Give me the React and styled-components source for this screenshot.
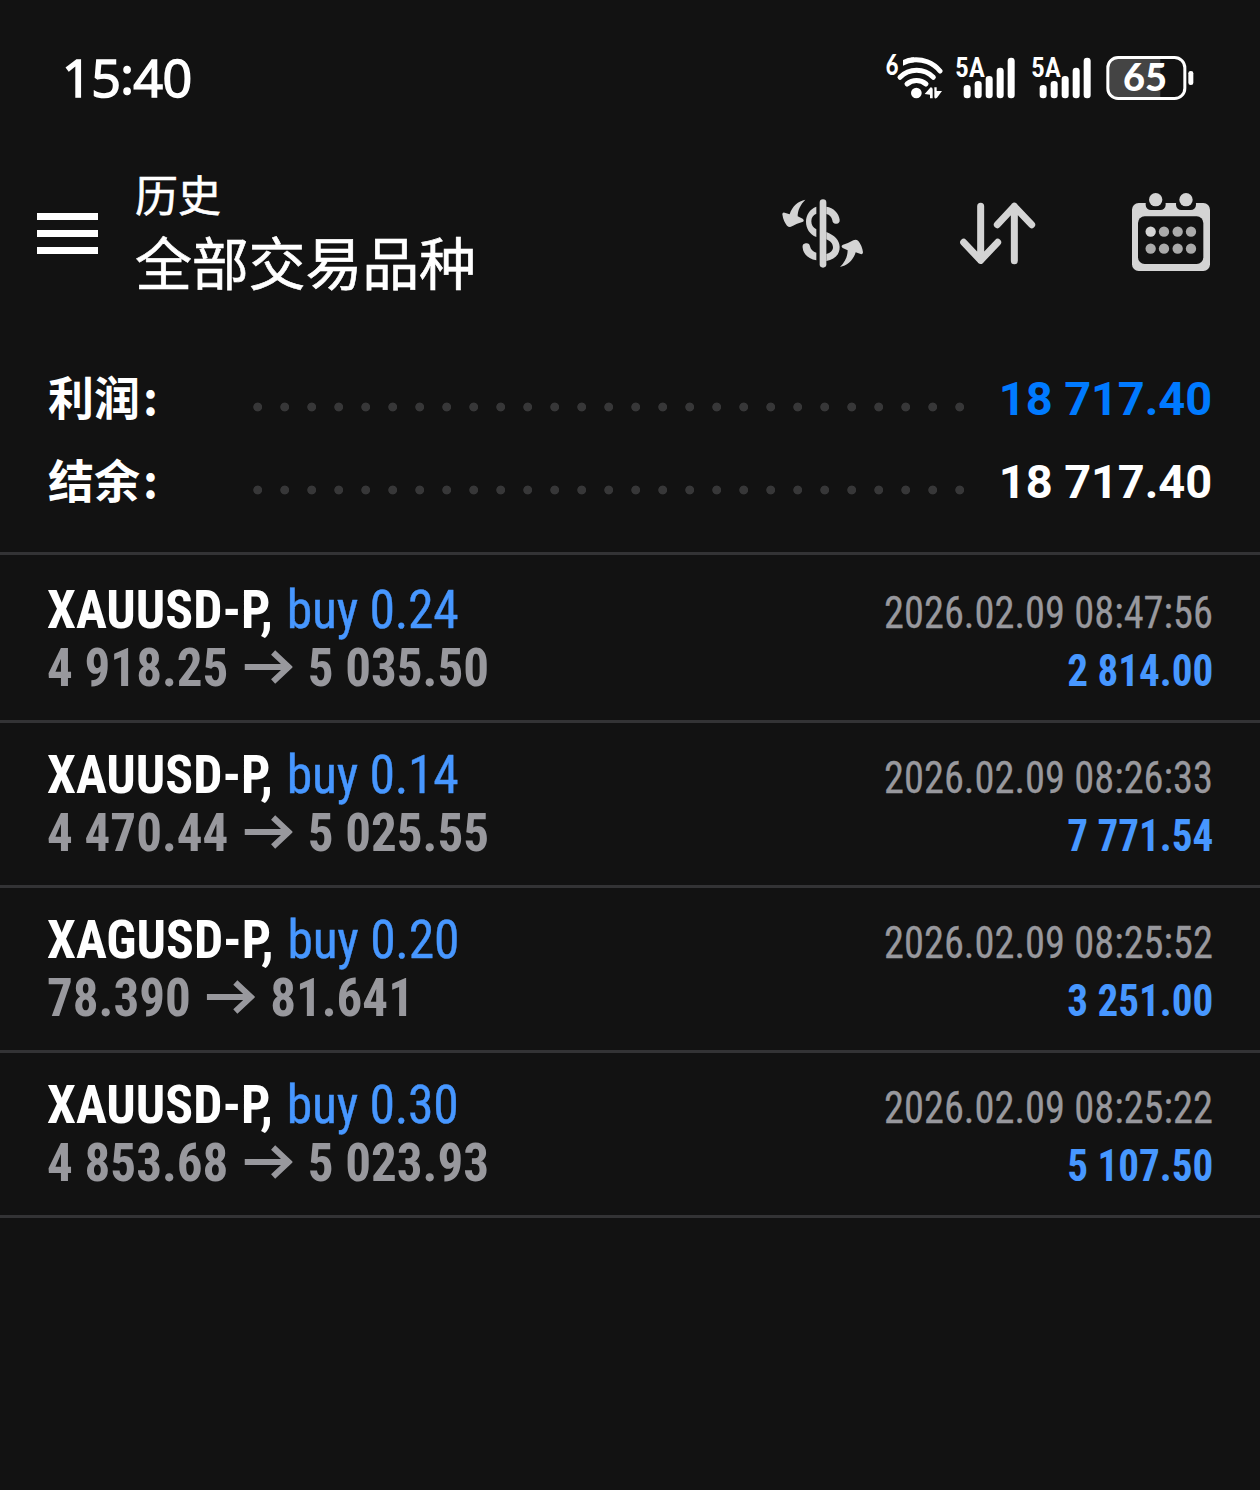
import React from 'react'
import styled, { createGlobalStyle } from 'styled-components'

const GlobalStyle = createGlobalStyle`
  body {
    margin: 0;
    background: #121212;
    color: #fff;
    font-family: Roboto, 'Noto Sans CJK SC', sans-serif;
  }
`

const Screen = styled.div`
  width: 1260px;
  height: 1490px;
  overflow: hidden;
  background: #121212;
`

const StatusBar = styled.div`
  display: flex;
  align-items: center;
  justify-content: space-between;
  height: 155px;
  padding: 0 66px 0 62px;
  box-sizing: border-box;
`

const Clock = styled.span`
  padding-bottom: 1px;
  font-family: 'Open Sans', sans-serif;
  font-size: 52px;
  letter-spacing: -0.6px;
  line-height: 60px;
  -webkit-text-stroke: 1.6px #fff;
`

const ClockColon = styled.span`
  line-height: 1;
  vertical-align: 3px;
`

const StatusIcons = styled.div`
  display: flex;
  align-items: center;
`

const StatusSvg = styled.svg`
  display: block;
  width: ${p => p.$w}px;
  height: 64px;
  margin-right: ${p => p.$gap || 0}px;
`

const Header = styled.header`
  display: flex;
  align-items: center;
  height: 157px;
  padding: 0 50px 0 37px;
`

const Burger = styled.div`
  display: flex;
  flex-direction: column;
  gap: 10px;
  width: 61px;
  margin-right: 37px;
`

const BurgerLine = styled.span`
  height: 7px;
  background: #fff;
`

const Titles = styled.div`
  flex: 1;
  padding-bottom: 8px;
  font-family: 'Noto Sans CJK SC', sans-serif;
  -webkit-text-stroke: 0.6px #fff;
`

const Subtitle = styled.div`
  font-size: 43px;
  line-height: 60px;
`

const Title = styled.div`
  font-size: 57px;
  letter-spacing: -0.2px;
  line-height: 74px;
`

const Actions = styled.div`
  display: flex;
  align-items: center;
`

const ActionSvg = styled.svg`
  display: block;
  width: ${p => p.$w}px;
  height: 80px;
  margin-left: ${p => p.$gap || 0}px;
  overflow: visible;
`

const Summary = styled.section`
  height: 243px;
  padding: 45px 48px 0;
  box-sizing: border-box;
  border-bottom: 3px solid #333335;
`

const SummaryRow = styled.div`
  display: flex;
  align-items: center;
  height: 83px;
`

const Label = styled.span`
  width: 204px;
  padding-bottom: 6px;
  font-family: 'Noto Sans CJK SC', sans-serif;
  font-size: 46px;
  font-weight: 700;
  line-height: 77px;
`

const Colon = styled.span`
  margin-left: 3px;
`

const Dots = styled.span`
  width: 716px;
  height: 10px;
  margin-top: 17px;
  background: radial-gradient(circle at 5.7px 5px, #373738 4px, transparent 4.8px) 0 0 / 27px 10px repeat-x;
`

const Total = styled.span`
  flex: 1;
  color: ${p => p.$color};
  font-size: 47px;
  font-weight: 700;
  letter-spacing: -0.1px;
  line-height: 83px;
  text-align: right;
  white-space: nowrap;
`

const Deal = styled.article`
  height: 165px;
  padding: 23px 47px 0;
  box-sizing: border-box;
  border-bottom: 3px solid #333335;
  font-family: 'Roboto Condensed', Roboto, sans-serif;
  font-stretch: 75%;
  &:first-of-type {
    height: 168px;
    padding-top: 26px;
  }
`

const Line = styled.div`
  display: flex;
  align-items: baseline;
  justify-content: space-between;
  height: 58px;
  line-height: 58px;
  white-space: nowrap;
`

const Symbol = styled.span`
  font-size: 54px;
  font-weight: 700;
  transform: scaleX(0.957);
  transform-origin: left;
`

const Side = styled.span`
  margin-left: 2px;
  color: #4797ff;
  font-weight: 400;
  letter-spacing: -0.3px;
  -webkit-text-stroke: 0.4px #4797ff;
`

const Prices = styled.span`
  color: #98989d;
  font-size: 54px;
  font-weight: 700;
  transform: scaleX(0.945);
  transform-origin: left;
`

const Arrow = styled.svg`
  width: 51px;
  height: 34px;
  margin: 0 16px 2px 17px;
`

const Time = styled.span`
  color: #98989d;
  font-size: 44px;
  transform: scaleX(0.919);
  transform-origin: right;
  -webkit-text-stroke: 0.3px #98989d;
`

const Profit = styled.span`
  color: #4797ff;
  font-size: 44px;
  font-weight: 700;
  transform: scaleX(0.935);
  transform-origin: right;
`

const deals = [
  { symbol: 'XAUUSD-P', side: 'buy 0.24', open: '4 918.25', close: '5 035.50', time: '2026.02.09 08:47:56', profit: '2 814.00' },
  { symbol: 'XAUUSD-P', side: 'buy 0.14', open: '4 470.44', close: '5 025.55', time: '2026.02.09 08:26:33', profit: '7 771.54' },
  { symbol: 'XAGUSD-P', side: 'buy 0.20', open: '78.390', close: '81.641', time: '2026.02.09 08:25:52', profit: '3 251.00' },
  { symbol: 'XAUUSD-P', side: 'buy 0.30', open: '4 853.68', close: '5 023.93', time: '2026.02.09 08:25:22', profit: '5 107.50' },
]

const condensed = {
  fontFamily: "'Roboto Condensed', Roboto, sans-serif",
  fontStretch: '75%',
}

function Wifi() {
  return (
    <StatusSvg $w={60} $gap={9} viewBox='39 18 180 192'>
      <text x='47' y='104' fill='#fff' fontSize='86' fontWeight='900' textLength='38' lengthAdjust='spacingAndGlyphs' fontFamily='Lato'>6</text>
      <g fill='none' stroke='#fff' strokeWidth='15' strokeLinecap='round'>
        <path d='M111 132 A44 44 0 0 1 168 132' />
        <path d='M90 112 A70 70 0 0 1 190 112' />
        <path d='M125 60 A93 93 0 0 1 210 93' />
      </g>
      <path d='M99 60 Q112 53 132 52 V67 Q114 69 99 77Z' fill='#fff' />
      <circle cx='139' cy='159' r='16' fill='#fff' />
      <path d='M164 162 L182 142 Q188 142 188 148 V175 H180 V164Z M193 142 H200 V153 H216 L201 173 Q193 179 193 170Z' fill='#fff' />
    </StatusSvg>
  )
}

function Signal({ gap }) {
  const tops = [135, 123, 108, 83, 53]
  return (
    <StatusSvg $w={63} $gap={gap} viewBox='247 18 189 192'>
      <text x='256' y='112' fill='#fff' fontSize='82' fontWeight='600' textLength='90' lengthAdjust='spacingAndGlyphs' style={condensed}>5A</text>
      {tops.map((top, i) => (
        <rect key={top} x={282 + i * 33} y={top} width='21' height={175 - top} rx='10' fill='#fff' />
      ))}
    </StatusSvg>
  )
}

function Battery() {
  return (
    <StatusSvg $w={88} viewBox='260 18 264 192'>
      <path d='M290 54 H423 V174 H290 Q267 174 267 150 V78 Q267 54 290 54Z' fill='#444' />
      <rect x='265.500' y='52.500' width='231' height='123' rx='31' fill='none' stroke='#fff' strokeWidth='9' />
      <rect x='507' y='93' width='15' height='42' rx='7' fill='#fff' />
      <text x='311' y='154' fill='#fff' fontSize='114' fontWeight='900' fontFamily='Lato' textLength='132' lengthAdjust='spacingAndGlyphs'>65</text>
    </StatusSvg>
  )
}

function CurrencyIcon() {
  return (
    <ActionSvg $w={82} viewBox='35 27 246 240'>
      <g fill='#d4d4d4'>
        <rect x='148' y='43' width='20' height='205' rx='10' />
        <path d='M138 65 C118 72 107 90 107 110 C107 130 118 148 138 156 V133 C128 128 123 120 123 109 C123 98 128 90 138 86Z' />
        <path d='M168 65 C190 68 205 84 208 104 A11 11 0 0 1 186 106 C184 96 178 89 168 87Z' />
        <path d='M168 141 C192 150 208 165 208 186 C208 210 192 224 168 228 V207 C180 204 188 197 188 187 C188 176 180 168 168 163Z' />
        <path d='M138 226 C115 222 99 208 97 188 A11 11 0 0 1 119 184 C121 194 128 200 138 203Z' />
        <path id='swap' d='M105 44 C84 48 65 64 58 88 L43 83 Q36 81 36 88 Q39 109 50 122 Q57 129 65 124 Q80 115 96 111 Q104 107 97 101 L82 94 C82 76 90 59 105 44Z' />
        <use href='#swap' transform='rotate(180 157 145)' />
      </g>
    </ActionSvg>
  )
}

function SortIcon() {
  return (
    <ActionSvg $w={76} $gap={96} viewBox='45 27 228 240'>
      <g fill='none' stroke='#d4d4d4' strokeWidth='21' strokeLinecap='round' strokeLinejoin='round'>
        <path d='M107 64 V226 M56 172 L107 226 L158 172' />
        <path d='M208 227 V64 M157 119 L208 64 L260 119' />
      </g>
    </ActionSvg>
  )
}

function CalendarIcon() {
  return (
    <ActionSvg $w={78} $gap={96} viewBox='51 27 234 240'>
      <rect x='51' y='54' width='234' height='204' rx='20' fill='#d4d4d4' />
      <rect x='92' y='40' width='60' height='35' rx='16' fill='#121212' />
      <rect x='183' y='40' width='60' height='35' rx='16' fill='#121212' />
      <circle cx='122' cy='44' r='20' fill='#d4d4d4' />
      <circle cx='213' cy='44' r='20' fill='#d4d4d4' />
      <rect x='69' y='94' width='196' height='143' rx='20' fill='#121212' />
      {[140, 191].map(cy => [107, 147, 188, 228].map(cx => (
        <circle key={cx} cx={cx} cy={cy} r='15.500' fill={cx === 107 && cy === 140 ? '#d4d4d4' : '#aaa'} />
      )))}
    </ActionSvg>
  )
}

export default function App() {
  return (
    <Screen>
      <GlobalStyle />
      <StatusBar>
        <Clock>15<ClockColon>:</ClockColon>40</Clock>
        <StatusIcons>
          <Wifi />
          <Signal gap={13} />
          <Signal gap={15} />
          <Battery />
        </StatusIcons>
      </StatusBar>
      <Header>
        <Burger>
          <BurgerLine />
          <BurgerLine />
          <BurgerLine />
        </Burger>
        <Titles>
          <Subtitle>历史</Subtitle>
          <Title>全部交易品种</Title>
        </Titles>
        <Actions>
          <CurrencyIcon />
          <SortIcon />
          <CalendarIcon />
        </Actions>
      </Header>
      <Summary>
        <SummaryRow>
          <Label>利润<Colon>:</Colon></Label>
          <Dots />
          <Total $color='#007aff'>18 717.40</Total>
        </SummaryRow>
        <SummaryRow>
          <Label>结余<Colon>:</Colon></Label>
          <Dots />
          <Total $color='#fff'>18 717.40</Total>
        </SummaryRow>
      </Summary>
      {deals.map(deal => (
        <Deal key={deal.time}>
          <Line>
            <Symbol>{deal.symbol}, <Side>{deal.side}</Side></Symbol>
            <Time>{deal.time}</Time>
          </Line>
          <Line>
            <Prices>
              {deal.open}
              <Arrow viewBox='0 0 48 34' preserveAspectRatio='none'>
                <path d='M0 17 H44 M28.500 2.500 L44 17 L28.500 31.500' fill='none' stroke='#98989d' strokeWidth='6' />
              </Arrow>
              {deal.close}
            </Prices>
            <Profit>{deal.profit}</Profit>
          </Line>
        </Deal>
      ))}
    </Screen>
  )
}
